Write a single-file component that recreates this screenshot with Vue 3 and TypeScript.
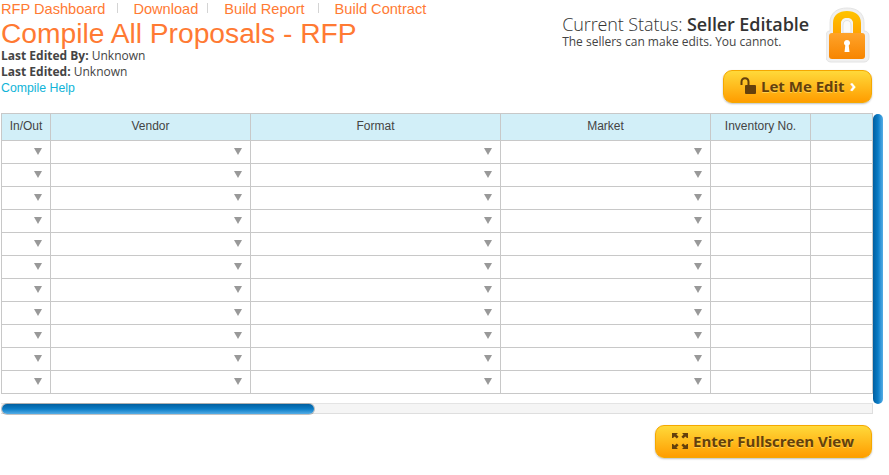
<script setup lang="ts">
const navLinks: string[] = ['RFP Dashboard', 'Download', 'Build Report', 'Build Contract']

interface Column {
  label: string
  width: number
  select: boolean
}

const columns: Column[] = [
  { label: 'In/Out', width: 49, select: true },
  { label: 'Vendor', width: 200, select: true },
  { label: 'Format', width: 250, select: true },
  { label: 'Market', width: 210, select: true },
  { label: 'Inventory No.', width: 100, select: false },
  { label: '', width: 62, select: false }
]

const rows: number[] = Array.from({ length: 11 }, (_, i) => i)
</script>

<template>
  <div class="page">
    <header class="top">
      <div class="top-left">
        <nav class="nav">
          <a v-for="link in navLinks" :key="link" class="nav-link">{{ link }}</a>
        </nav>
        <h1 class="title">Compile All Proposals - RFP</h1>
        <p class="meta"><b>Last Edited By:</b> Unknown</p>
        <p class="meta"><b>Last Edited:</b> Unknown</p>
        <a class="help">Compile Help</a>
      </div>
      <div class="top-right">
        <div class="status-row">
          <div class="status">
            <div class="status-head"><span class="status-label">Current Status:</span> <b>Seller Editable</b></div>
            <div class="status-sub">The sellers can make edits. You cannot.</div>
          </div>
          <svg class="lock" width="44" height="56" viewBox="0 0 44 56">
            <defs>
              <linearGradient id="lockBody" x1="0" y1="0" x2="0" y2="1">
                <stop offset="0" stop-color="#ffa32a" />
                <stop offset="1" stop-color="#f78500" />
              </linearGradient>
              <linearGradient id="lockShackle" x1="0" y1="0" x2="0" y2="1">
                <stop offset="0" stop-color="#ffc400" />
                <stop offset="1" stop-color="#ffa200" />
              </linearGradient>
            </defs>
            <path d="M4 24 V16 C4 6 11 1 21 1 C31 1 38 6 38 16 V24 C41 24 43 26 43 29 V50 C43 53 41 55 38 55 H5 C2 55 0 53 0 50 V29 C0 26 1 24 4 24 Z" fill="#f0f0f0" stroke="#e4e4e4" />
            <path d="M7 28 V16 C7 8 13 4 21 4 C29 4 35 8 35 16 V28 H27 V17 C27 13 24.500 11 21 11 C17.500 11 15 13 15 17 V28 Z" fill="url(#lockShackle)" />
            <path d="M15 26 V17 C15 13 17.500 11 21 11 C24.500 11 27 13 27 17 V26 Z" fill="#f4f4f4" />
            <path d="M17 26 V18 C17 15 18.800 13.500 21 13.500 C23.200 13.500 25 15 25 18 V26 Z" fill="#fbfbfb" stroke="#d8d8d8" stroke-width="0.7" />
            <rect x="3" y="26" width="36" height="26" rx="3" fill="url(#lockBody)" />
            <path d="M21 33 a3 3 0 0 1 1.700 5.500 L23.500 45 H18.500 L19.300 38.500 A3 3 0 0 1 21 33 Z" fill="#ffffff" />
          </svg>
        </div>
        <button class="btn btn-edit" type="button">
          <svg width="17" height="18" viewBox="0 0 17 18">
            <path d="M1.500 8 V5 C1.500 2.600 3 1.200 5 1.200 C7 1.200 8.500 2.600 8.500 5 V9" fill="none" stroke="#64400c" stroke-width="2" />
            <rect x="5" y="8" width="11" height="9" rx="1" fill="#64400c" />
          </svg>
          <span>Let Me Edit</span>
          <span class="chevron">›</span>
        </button>
      </div>
    </header>

    <section class="grid-area">
      <div class="grid-main">
        <table class="grid">
          <colgroup>
            <col v-for="col in columns" :key="col.label" :style="{ width: col.width + 'px' }" />
          </colgroup>
          <thead>
            <tr>
              <th v-for="col in columns" :key="col.label">{{ col.label }}</th>
            </tr>
          </thead>
          <tbody>
            <tr v-for="row in rows" :key="row">
              <td v-for="col in columns" :key="col.label">
                <span v-if="col.select" class="arrow"></span>
              </td>
            </tr>
          </tbody>
        </table>
        <div class="hscroll"><div class="hscroll-thumb"></div></div>
      </div>
      <div class="vscroll"></div>
    </section>

    <footer class="bottom">
      <button class="btn btn-full" type="button">
        <svg width="16" height="18" viewBox="0 0 16 18" fill="#64400c">
          <path d="M0 1 H6 L4.400 2.600 L6.600 4.800 L4.800 6.600 L2.600 4.400 L1 6 H0 Z" />
          <path d="M16 1 H10 L11.600 2.600 L9.400 4.800 L11.200 6.600 L13.400 4.400 L15 6 H16 Z" />
          <path d="M0 17 H6 L4.400 15.400 L6.600 13.200 L4.800 11.400 L2.600 13.600 L1 12 H0 Z" />
          <path d="M16 17 H10 L11.600 15.400 L9.400 13.200 L11.200 11.400 L13.400 13.600 L15 12 H16 Z" />
        </svg>
        <span>Enter Fullscreen View</span>
      </button>
    </footer>
  </div>
</template>

<style>
html,
body {
  margin: 0;
  background: #fff;
}
</style>

<style scoped>
.page {
  width: 889px;
  height: 475px;
  overflow: hidden;
  font-family: "Open Sans", sans-serif;
  color: #3c3c3c;
  box-sizing: border-box;
}

.top {
  display: flex;
  justify-content: space-between;
  height: 113px;
  padding-left: 1px;
  padding-right: 17px;
  box-sizing: border-box;
}

.nav {
  display: flex;
  height: 18px;
  font: 14.600px/18px "Liberation Sans", Arial, sans-serif;
  color: #ff7a33;
}

.nav-link {
  position: relative;
  margin-right: 26px;
}

.nav-link:nth-child(1) {
  margin-right: 28px;
}

.nav-link:nth-child(3) {
  margin-right: 30px;
}

.nav-link:not(:last-child)::after {
  content: "";
  position: absolute;
  right: -10px;
  top: 3px;
  height: 10px;
  width: 1px;
  background: #d4d4d4;
}

.nav-link:nth-child(1)::after {
  right: -13px;
}

.nav-link:nth-child(3)::after {
  right: -14px;
}

.title {
  margin: 0;
  font: 400 28.200px/30px "Liberation Sans", Arial, sans-serif;
  color: #ff7a33;
}

.meta {
  margin: 0;
  font-size: 12px;
  line-height: 16px;
  color: #444;
}

.meta b {
  font-weight: 700;
}

.help {
  display: block;
  font: 12.300px/16px "Liberation Sans", Arial, sans-serif;
  color: #10b4d8;
}

.top-right {
  display: flex;
  flex-direction: column;
  align-items: flex-end;
}

.status-row {
  display: flex;
  margin-top: 7px;
  margin-right: 2px;
}

.status {
  margin-top: 7px;
  margin-right: 17px;
}

.status-head {
  font-size: 18px;
  line-height: 20px;
  letter-spacing: -0.1px;
  color: #333;
}

.status-head b {
  font-weight: 600;
}

.status-label {
  font-weight: 300;
}

.status-sub {
  font-size: 12px;
  line-height: 15px;
  color: #444;
}

.lock {
  display: block;
}

.btn {
  display: flex;
  align-items: center;
  height: 33px;
  border: 1px solid #f5a800;
  border-radius: 9px;
  background: linear-gradient(#ffd93a, #ff9d00);
  box-shadow: 0 1px 2px rgba(0, 0, 0, 0.25);
  font-family: "Open Sans", sans-serif;
  font-weight: 700;
  font-size: 15px;
  color: #64400c;
  text-shadow: 0 1px 0 rgba(255, 230, 120, 0.6);
  padding: 0 0 2px;
  box-sizing: border-box;
}

.btn-edit {
  width: 149px;
  margin-top: 7px;
  padding-left: 16px;
  gap: 4px;
}

.chevron {
  color: #fff;
  font-size: 18px;
  line-height: 17px;
  margin-left: 1px;
  text-shadow: none;
}

.grid-area {
  display: flex;
  align-items: flex-start;
  padding-left: 1px;
}

.grid-main {
  width: 872px;
}

.grid {
  table-layout: fixed;
  width: 872px;
  border-collapse: collapse;
  font: 12px "Liberation Sans", Arial, sans-serif;
  color: #444;
}

.grid th,
.grid td {
  border: 1px solid #c8c8c8;
  padding: 0;
  box-sizing: border-box;
}

.grid th {
  height: 27px;
  padding-bottom: 2px;
  background: #d2eff8;
  font-weight: 400;
  text-align: center;
}

.grid td {
  height: 23px;
  text-align: right;
}

.arrow {
  display: inline-block;
  width: 0;
  height: 0;
  margin-right: 8px;
  margin-bottom: 2px;
  vertical-align: middle;
  border-left: 4px solid transparent;
  border-right: 4px solid transparent;
  border-top: 7px solid #999;
}

.hscroll {
  height: 11px;
  margin-top: 9px;
  background: #f5f5f5;
  border-bottom: 1px solid #dedede;
  border-right: 1px solid #dedede;
  border-top: 1px solid #e4e4e4;
  box-sizing: border-box;
}

.hscroll-thumb {
  width: 312px;
  height: 10px;
  margin-left: 1px;
  border-radius: 5px;
  background: linear-gradient(#025f9f, #0a7cc6 50%, #55ade6);
  box-shadow: 0 0 0 1px rgba(80, 80, 80, 0.35);
}

.vscroll {
  width: 10px;
  height: 290px;
  margin-top: 1px;
  border-radius: 5px;
  background: linear-gradient(90deg, #025f9f, #0a7cc6 50%, #55ade6);
}

.bottom {
  display: flex;
  justify-content: flex-end;
  padding-right: 17px;
  margin-top: 11px;
}

.btn-full {
  width: 217px;
  padding-left: 16px;
  gap: 5px;
}
</style>
